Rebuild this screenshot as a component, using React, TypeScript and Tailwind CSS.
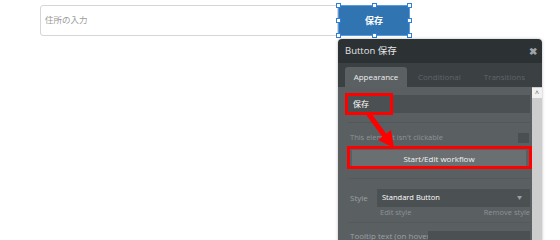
import React from 'react';

function Handle({ className }: { className: string }) {
  return <span className={`absolute w-[5px] h-[5px] bg-white border border-[#2f7fd6] ${className}`} />;
}

/**
 * Editor canvas: an address input, a selected save button and
 * the floating property editor with red annotation marks on top.
 */
export default function App() {
  return (
    <div className="relative w-[560px] h-[240px] bg-white overflow-hidden font-['Open_Sans','Noto_Sans_CJK_JP',sans-serif]">
      {/* Canvas row */}
      <div className="flex pt-[5px] pl-[40px]">
        <div className="w-[298px] h-[31px] border border-[#d6d6d6] rounded-[3px] flex items-center pl-[4px] text-[8.5px] text-[#9a9a9a]">
          住所の入力
        </div>
        <div className="relative w-[72px] h-[31px] bg-[#3174b2] flex items-center justify-center text-white text-[9px] font-bold">
          保存
          <div className="absolute inset-0 border border-[#5a9be0]" />
          <Handle className="-left-[2px] -top-[2px]" />
          <Handle className="left-[34px] -top-[2px]" />
          <Handle className="-right-[2px] -top-[2px]" />
          <Handle className="-left-[2px] top-[13px]" />
          <Handle className="-right-[2px] top-[13px]" />
          <Handle className="-left-[2px] -bottom-[2px]" />
          <Handle className="left-[34px] -bottom-[2px]" />
          <Handle className="-right-[2px] -bottom-[2px]" />
        </div>
      </div>

      {/* Property editor */}
      <div className="absolute left-[338px] top-[39px] w-[204px] h-[230px] rounded-t-[4px] overflow-hidden shadow-[0_0_3px_rgba(0,0,0,0.3)] flex flex-col">
        <div className="shrink-0 h-[24px] bg-[#2c3134] flex items-center justify-between pl-[7px] pr-[5px]">
          <span className="text-[9.5px] text-[#e4e6e7]">Button 保存</span>
          <span className="text-[10px] font-bold text-[#9ea4a8] leading-none">✖</span>
        </div>
        <div className="shrink-0 h-[24px] bg-[#3b4043] flex items-end pl-[7px] text-[8px]">
          <div className="w-[62px] h-[20px] bg-[#5b6063] rounded-t-[3px] flex items-center justify-center text-[#eceeef]">
            Appearance
          </div>
          <div className="h-[20px] flex items-center ml-[11px] text-[#60656a]">Conditional</div>
          <div className="h-[20px] flex items-center ml-[23px] text-[#60656a]">Transitions</div>
        </div>
        <div className="flex flex-1 bg-[#5a5f62]">
          <div className="flex-1 flex flex-col pl-[10px] pr-[2px] pt-[8px]">
            <div className="shrink-0 h-[18px] bg-[#4b5053] flex items-center pl-[5px] text-[8px] text-white">保存</div>
            <div className="shrink-0 h-px bg-[#52575a] mt-[9px]" />
            <div className="shrink-0 flex items-center justify-between h-[12px] mt-[9px] pl-[2px] pr-[1px]">
              <span className="text-[7.5px] text-[#8e9396]">This element isn't clickable</span>
              <span className="w-[11px] h-[10px] bg-[#4a4f52]" />
            </div>
            <div className="shrink-0 h-[17px] mt-[6px] mx-[4px] bg-[#6a6f72] flex items-center justify-center text-[8px] text-[#f2f2f2]">
              Start/Edit workflow
            </div>
            <div className="shrink-0 h-px bg-[#55595c] mt-[11px]" />
            <div className="shrink-0 flex items-center mt-[10px]">
              <span className="w-[29px] pl-[2px] text-[8px] text-[#9ca1a4]">Style</span>
              <div className="flex-1 h-[18px] bg-[#4b5053] flex items-center justify-between pl-[5px] pr-[8px]">
                <span className="text-[7.5px] font-medium text-white">Standard Button</span>
                <span className="text-[5px] text-[#9ca1a4]">▼</span>
              </div>
            </div>
            <div className="shrink-0 h-[12px] flex items-center justify-between pl-[32px] text-[7.5px] text-[#8e9396]">
              <span>Edit style</span>
              <span>Remove style</span>
            </div>
            <div className="shrink-0 h-px bg-[#55595c] mt-[3px]" />
            <div className="shrink-0 flex items-start mt-[7px]">
              <span className="w-[80px] pl-[2px] text-[8px] text-[#9ca1a4] whitespace-nowrap">Tooltip text (on hover)</span>
              <div className="flex-1 h-[22px] mt-[1px] bg-[#4b5053]" />
            </div>
          </div>
          {/* Scrollbar */}
          <div className="w-[10px] bg-[#cdcdcd] flex flex-col">
            <div className="h-[10px] bg-[#f1f1f1] flex items-center justify-center text-[7px] text-[#555] leading-none mt-[1px]">^</div>
          </div>
        </div>
      </div>

      {/* Annotations */}
      <div className="absolute left-[345px] top-[93px] w-[48px] h-[22px] border-[3px] border-[#ff0000]" />
      <div className="absolute left-[347px] top-[146px] w-[185px] h-[23px] border-[3px] border-[#ff0000]" />
      <svg className="absolute left-[360px] top-[108px]" width="42" height="44" viewBox="360 108 42 44">
        <line x1="368" y1="113" x2="387" y2="139" stroke="#ff0000" strokeWidth="5" />
        <polygon points="394,148 378,140 391,130" fill="#ff0000" />
      </svg>
    </div>
  );
}
